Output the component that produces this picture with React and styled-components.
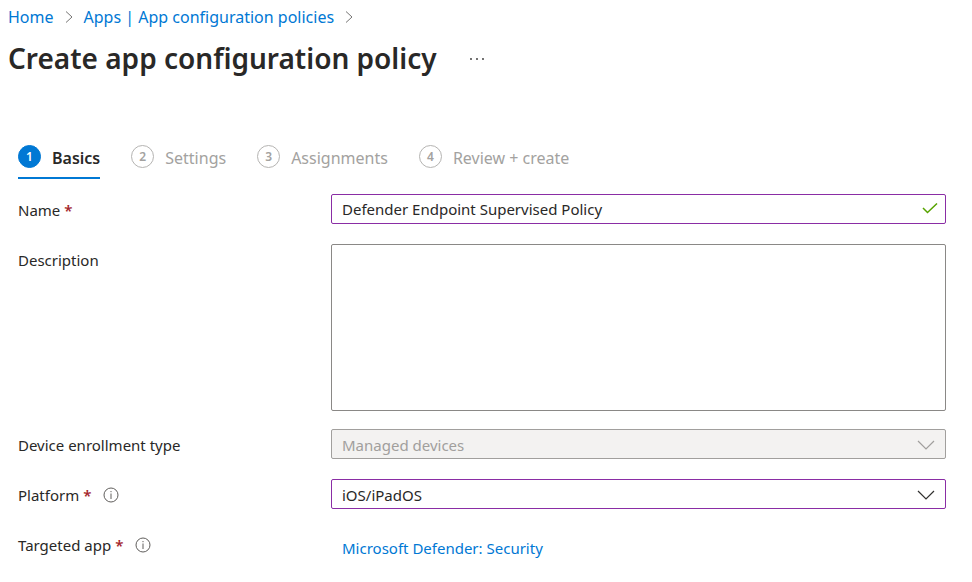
import React from "react";
import styled, { createGlobalStyle } from "styled-components";

const GlobalStyle = createGlobalStyle`
  *, *::before, *::after { box-sizing: border-box; }
  body {
    margin: 0;
    background: #fff;
    color: #292827;
    font-family: "Segoe UI", "Noto Sans", "Open Sans", sans-serif;
    font-size: 15px;
    line-height: 30px;
  }
  button, input, select, textarea { font: inherit; color: inherit; }
`;

const Page = styled.main`
  padding: 4px 26px 16px 8px;
`;

const Breadcrumb = styled.nav`
  display: flex;
  align-items: center;
  font-size: 16px;
  line-height: 26px;
`;

const Link = styled.a`
  color: #0078d4;
  text-decoration: none;
  white-space: nowrap;
  &:hover { text-decoration: underline; }
`;

const CrumbArrow = styled.svg`
  width: 8px;
  height: 14px;
  margin: 0 11px;
  flex: none;
  fill: none;
  stroke: #767574;
`;

const TitleBar = styled.header`
  display: flex;
  align-items: center;
  gap: 32px;
  padding-top: 8px;
`;

const Title = styled.h1`
  margin: 0;
  font-size: 28px;
  line-height: 40px;
  font-weight: 600;
`;

const MoreButton = styled.button`
  display: flex;
  padding: 0;
  border: 0;
  background: none;
  svg { width: 16px; height: 16px; fill: #323130; }
`;

const Steps = styled.div`
  display: flex;
  gap: 31px;
  margin: 60px 0 0 10px;
`;

const Step = styled.button`
  display: flex;
  align-items: center;
  gap: 11px;
  height: 41px;
  padding: 0;
  border: 0;
  border-bottom: 2px solid ${(p) => (p.$active ? "#0078d4" : "transparent")};
  background: none;
  color: ${(p) => (p.$active ? "#292827" : "#a3a2a0")};
  font-size: 16px;
  font-weight: ${(p) => (p.$active ? 600 : 400)};
  line-height: 24px;
  white-space: nowrap;
`;

const StepNumber = styled.span`
  display: flex;
  align-items: center;
  justify-content: center;
  width: 23px;
  height: 23px;
  margin-bottom: 2px;
  border: 1px solid ${(p) => (p.$active ? "#0078d4" : "#b5b4b2")};
  border-radius: 50%;
  background: ${(p) => (p.$active ? "#0078d4" : "#fff")};
  color: ${(p) => (p.$active ? "#fff" : "#a3a2a0")};
  font-size: 12px;
  font-weight: 600;
  line-height: 20px;
`;

const Form = styled.form`
  padding: 15px 0 0 10px;
`;

const Row = styled.div`
  display: grid;
  grid-template-columns: 313px minmax(0, 1fr);
  align-items: start;
  min-height: 50px;
`;

const LabelCell = styled.div`
  display: flex;
  align-items: center;
  gap: 12px;
  padding-top: 1px;
`;

const Star = styled.span`
  margin-left: 4px;
  color: #a4262c;
  font-weight: 600;
`;

const InfoButton = styled.button`
  display: flex;
  padding: 0;
  border: 0;
  background: none;
  svg { width: 16px; height: 16px; }
`;

const Control = styled.div`
  display: grid;
  align-items: center;
  > * { grid-area: 1 / 1; }
`;

const borderColor = (p) => (p.$edited ? "#8a2da5" : "#8a8886");

const TextInput = styled.input`
  width: 100%;
  height: 30px;
  padding: 0 36px 0 10px;
  border: 1px solid ${borderColor};
  border-radius: 2px;
  background: #fff;
  outline: none;
`;

const TextArea = styled.textarea`
  display: block;
  width: 100%;
  height: 167px;
  margin-bottom: 18px;
  padding: 4px 10px;
  border: 1px solid #8a8886;
  border-radius: 2px;
  line-height: 22px;
  resize: none;
  outline: none;
`;

const Select = styled.select`
  appearance: none;
  width: 100%;
  height: 30px;
  padding: 0 36px 0 10px;
  border: 1px solid ${borderColor};
  border-radius: 2px;
  background: #fff;
  outline: none;
  &:disabled {
    background: #f3f2f1;
    border-color: #a19f9d;
    color: #a19f9d;
    opacity: 1;
  }
`;

const ControlIcon = styled.svg`
  justify-self: end;
  width: 18px;
  height: 12px;
  margin-right: ${(p) => (p.$tick ? "7px" : "11px")};
  fill: none;
  stroke: ${(p) => p.$color};
  stroke-width: ${(p) => (p.$tick ? 1.5 : 1.2)};
  pointer-events: none;
`;

const AppValue = styled.div`
  padding: 4px 0 0 11px;
`;

function Separator() {
  return (
    <CrumbArrow viewBox="0 0 8 14" aria-hidden="true">
      <path d="M1 1.5 7 7 1 12.5" />
    </CrumbArrow>
  );
}

function FieldLabel({ id, text, required, info }) {
  return (
    <LabelCell>
      <label htmlFor={id}>
        {text}
        {required && <Star>*</Star>}
      </label>
      {info && (
        <InfoButton type="button" aria-label={`About ${text}`}>
          <svg viewBox="0 0 16 16" aria-hidden="true">
            <circle cx="8" cy="8" r="7" fill="none" stroke="#605e5c" />
            <path d="M8 6.5V12" stroke="#605e5c" />
            <path d="M8 4V5.2" stroke="#605e5c" />
          </svg>
        </InfoButton>
      )}
    </LabelCell>
  );
}

function Dropdown({ id, value, edited, disabled }) {
  return (
    <Control>
      <Select id={id} $edited={edited} disabled={disabled} defaultValue={value}>
        <option>{value}</option>
      </Select>
      <ControlIcon viewBox="0 0 18 12" $color={disabled ? "#a19f9d" : "#323130"} aria-hidden="true">
        <path d="M1 3 9 11 17 3" />
      </ControlIcon>
    </Control>
  );
}

const steps = ["Basics", "Settings", "Assignments", "Review + create"];

export default function App() {
  return (
    <>
      <GlobalStyle />
      <Page>
        <Breadcrumb aria-label="Breadcrumb">
          <Link href="#home">Home</Link>
          <Separator />
          <Link href="#policies">Apps | App configuration policies</Link>
          <Separator />
        </Breadcrumb>
        <TitleBar>
          <Title>Create app configuration policy</Title>
          <MoreButton type="button" aria-label="More actions">
            <svg viewBox="0 0 16 16" aria-hidden="true">
              <circle cx="2" cy="9" r="0.9" />
              <circle cx="8" cy="9" r="0.9" />
              <circle cx="14" cy="9" r="0.9" />
            </svg>
          </MoreButton>
        </TitleBar>
        <Steps role="tablist">
          {steps.map((name, i) => (
            <Step key={name} type="button" role="tab" aria-selected={i === 0} $active={i === 0}>
              <StepNumber $active={i === 0}>{i + 1}</StepNumber>
              {name}
            </Step>
          ))}
        </Steps>
        <Form>
          <Row>
            <FieldLabel id="name" text="Name" required />
            <Control>
              <TextInput id="name" type="text" $edited defaultValue="Defender Endpoint Supervised Policy" />
              <ControlIcon viewBox="0 0 18 12" $tick $color="#57a300" aria-hidden="true">
                <path d="M2 5 6.5 9.5 16 0.5" />
              </ControlIcon>
            </Control>
          </Row>
          <Row>
            <FieldLabel id="description" text="Description" />
            <TextArea id="description" />
          </Row>
          <Row>
            <FieldLabel id="enrollment" text="Device enrollment type" />
            <Dropdown id="enrollment" value="Managed devices" disabled />
          </Row>
          <Row>
            <FieldLabel id="platform" text="Platform" required info />
            <Dropdown id="platform" value="iOS/iPadOS" edited />
          </Row>
          <Row>
            <FieldLabel id="targeted" text="Targeted app" required info />
            <AppValue>
              <Link id="targeted" href="#defender">Microsoft Defender: Security</Link>
            </AppValue>
          </Row>
        </Form>
      </Page>
    </>
  );
}
